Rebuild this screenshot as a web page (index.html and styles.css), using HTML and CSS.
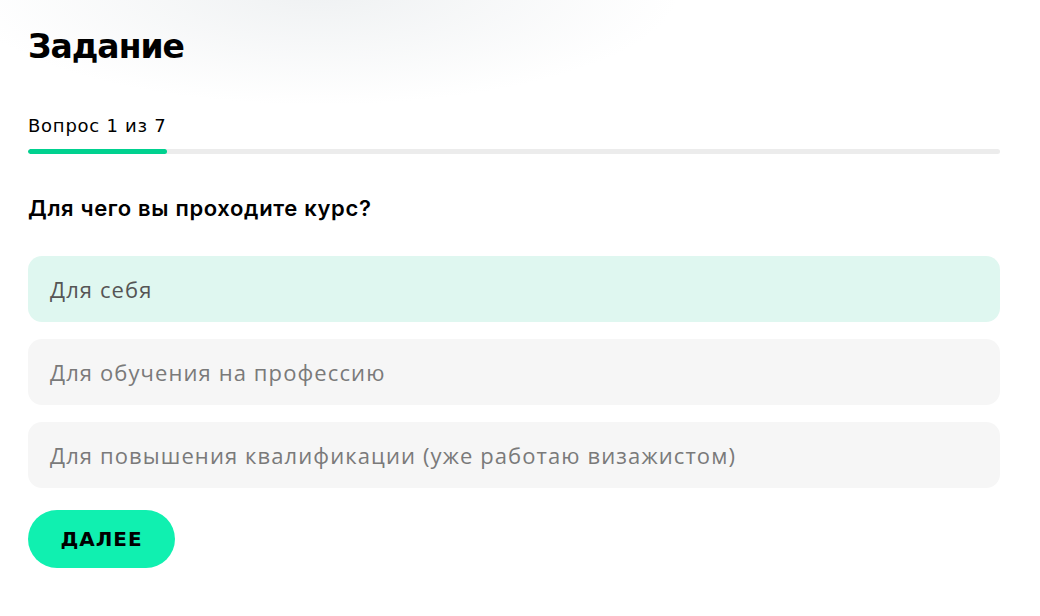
FILE: index.html
```html
<!DOCTYPE html>
<html lang="ru">
<head>
<meta charset="utf-8">
<title>Задание</title>
<link rel="stylesheet" href="styles.css">
</head>
<body>
<div class="page">
  <main class="quiz">
    <h1 class="quiz__title">Задание</h1>
    <div class="quiz__counter">Вопрос 1 из 7</div>
    <div class="progress"><div class="progress__fill" style="width: 14.2857%"></div></div>
    <h2 class="quiz__question">Для чего вы проходите курс?</h2>
    <ul class="options">
      <li class="option option--active">Для себя</li>
      <li class="option">Для обучения на профессию</li>
      <li class="option">Для повышения квалификации (уже работаю визажистом)</li>
    </ul>
    <button class="btn" type="button">ДАЛЕЕ</button>
  </main>
</div>
</body>
</html>
```
FILE: styles.css
```css
html, body {
  margin: 0;
  padding: 0;
  background: #ffffff;
}
body {
  font-family: "Open Sans", "Noto Sans", sans-serif;
  color: #000;
}
.page {
  min-height: 616px;
  background:
    radial-gradient(ellipse 360px 115px at 320px -10px, rgba(205, 212, 216, 0.32), rgba(255,255,255,0) 100%);
}
.quiz {
  width: 972px;
  padding: 24px 0 0 28px;
}
.quiz__title {
  margin: 0;
  font-family: "DejaVu Sans", sans-serif;
  font-weight: 700;
  font-size: 33px;
  line-height: 46px;
  letter-spacing: -1px;
}
.quiz__counter {
  margin-top: 44px;
  font-family: "DejaVu Sans", sans-serif;
  font-size: 18px;
  line-height: 24px;
  letter-spacing: 0.75px;
}
.progress {
  margin-top: 11px;
  height: 5px;
  border-radius: 3px;
  background: #ececec;
  overflow: hidden;
}
.progress__fill {
  height: 100%;
  border-radius: 3px;
  background: #00d18f;
}
.quiz__question {
  margin: 41px 0 0;
  font-family: "Inter", sans-serif;
  font-weight: 600;
  font-size: 22px;
  line-height: 26px;
  letter-spacing: 0.65px;
}
.options {
  list-style: none;
  margin: 35px 0 0;
  padding: 0;
  display: flex;
  flex-direction: column;
  gap: 17px;
}
.option {
  height: 66px;
  display: flex;
  align-items: center;
  padding-left: 22px;
  border-radius: 14px;
  background: #f6f6f6;
  color: #7a7a7a;
  font-size: 22px;
  letter-spacing: 1.1px;
}
.option--active {
  background: #dff7f0;
  color: #555;
}
.btn {
  margin-top: 22px;
  width: 147px;
  height: 58px;
  padding: 0;
  border: 0;
  border-radius: 29px;
  background: #10f0b0;
  color: #000;
  font-family: "DejaVu Sans", sans-serif;
  font-weight: 700;
  font-size: 20px;
  letter-spacing: 1px;
  cursor: pointer;
}
```
